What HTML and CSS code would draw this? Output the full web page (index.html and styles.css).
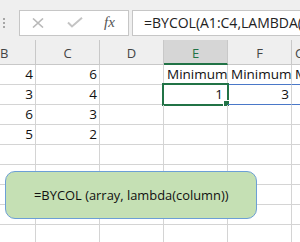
FILE: index.html
```html
<!DOCTYPE html>
<html lang="en">
<head>
  <meta charset="UTF-8" />
  <title>BYCOL</title>
  <link rel="stylesheet" href="styles.css">
</head>
<body>
  <div class="app">
    <!-- formula bar -->
    <div class="toolbar">
      <div class="grip"><span></span><span></span><span></span></div>
      <div class="fx-buttons">
        <svg class="icon cancel" width="12" height="10" viewBox="0 0 12 10">
          <path d="M1 0.5 L11 9.5 M11 0.5 L1 9.5" stroke="#b9b9b9" stroke-width="1.6" fill="none"/>
        </svg>
        <svg class="icon enter" width="16" height="11" viewBox="0 0 16 11">
          <path d="M1 5.5 L5 9.5 L15 0.8" stroke="#c4c4c4" stroke-width="2" fill="none"/>
        </svg>
        <span class="fx">fx</span>
      </div>
      <div class="formula">=BYCOL(A1:C4,LAMBDA(a,MIN(a)))</div>
    </div>

    <!-- grid -->
    <div class="sheet">
      <div class="row head">
        <div class="cell col-b">B</div>
        <div class="cell">C</div>
        <div class="cell">D</div>
        <div class="cell active">E</div>
        <div class="cell">F</div>
        <div class="cell col-g">G</div>
      </div>
      <div class="row">
        <div class="cell col-b num">4</div>
        <div class="cell num">6</div>
        <div class="cell"></div>
        <div class="cell">Minimum</div>
        <div class="cell spill-bottom">Minimum</div>
        <div class="cell col-g spill-bottom">Minimum</div>
      </div>
      <div class="row">
        <div class="cell col-b num">3</div>
        <div class="cell num">4</div>
        <div class="cell"></div>
        <div class="cell num selected">1<span class="sel-box"></span><span class="handle"></span></div>
        <div class="cell num spill-bottom">3</div>
        <div class="cell col-g spill-bottom"></div>
      </div>
      <div class="row">
        <div class="cell col-b num">6</div>
        <div class="cell num">3</div>
        <div class="cell"></div><div class="cell"></div><div class="cell"></div><div class="cell col-g"></div>
      </div>
      <div class="row">
        <div class="cell col-b num">5</div>
        <div class="cell num">2</div>
        <div class="cell"></div><div class="cell"></div><div class="cell"></div><div class="cell col-g"></div>
      </div>
      <div class="row">
        <div class="cell col-b"></div><div class="cell"></div><div class="cell"></div><div class="cell"></div><div class="cell"></div><div class="cell col-g"></div>
      </div>
      <div class="row">
        <div class="cell col-b"></div><div class="cell"></div><div class="cell"></div><div class="cell"></div><div class="cell"></div><div class="cell col-g"></div>
      </div>
      <div class="row">
        <div class="cell col-b"></div><div class="cell"></div><div class="cell"></div><div class="cell"></div><div class="cell"></div><div class="cell col-g"></div>
      </div>
      <div class="row">
        <div class="cell col-b"></div><div class="cell"></div><div class="cell"></div><div class="cell"></div><div class="cell"></div><div class="cell col-g"></div>
      </div>
      <div class="row">
        <div class="cell col-b"></div><div class="cell"></div><div class="cell"></div><div class="cell"></div><div class="cell"></div><div class="cell col-g"></div>
      </div>
    </div>

    <!-- shape floating over the sheet -->
    <div class="callout">=BYCOL (array, lambda(column))</div>
  </div>
</body>
</html>
```

FILE: styles.css
```css
body {
  margin: 0;
  font-family: 'Open Sans', sans-serif;
  background: #fff;
  overflow: hidden;
}

.app {
  position: relative;
  width: 300px;
  height: 242px;
  overflow: hidden;
}

/* formula bar */
.toolbar {
  height: 40px;
  background: #efefef;
  display: flex;
  align-items: center;
  padding-top: 5px;
  box-sizing: border-box;
}

.grip {
  width: 19px;
  display: flex;
  flex-direction: column;
  gap: 2px;
  padding-left: 3px;
  box-sizing: border-box;
}

.grip span {
  width: 2px;
  height: 2px;
  background: #a6a6a6;
}

.fx-buttons {
  width: 110px;
  height: 26px;
  box-sizing: border-box;
  background: #fff;
  border: 1px solid #c6c6c6;
  display: flex;
  align-items: center;
  padding-left: 12px;
}

.enter {
  margin-left: 23px;
}

.fx {
  font-family: 'Liberation Serif', serif;
  font-style: italic;
  font-size: 15px;
  color: #555;
  margin-left: 21px;
}

.formula {
  margin-left: 3px;
  flex: 1;
  height: 26px;
  box-sizing: border-box;
  background: #fff;
  border: 1px solid #c6c6c6;
  border-right: none;
  padding-left: 11px;
  font-size: 14px;
  line-height: 24px;
  color: #222;
  white-space: nowrap;
  overflow: hidden;
}

/* grid */
.row {
  display: flex;
  height: 20px;
}

.cell {
  position: relative;
  width: 64px;
  flex: none;
  box-sizing: border-box;
  border-right: 1px solid #d4d4d4;
  border-bottom: 1px solid #d4d4d4;
  font-size: 13.5px;
  line-height: 19px;
  padding: 0 3px;
  color: #111;
  white-space: nowrap;
}

.col-b {
  width: 36px;
}

.col-g {
  flex: 1;
  border-right: none;
  overflow: hidden;
}

.num {
  text-align: right;
  padding-right: 2px;
}

.head {
  height: 25px;
  background: #efefef;
}

.head .cell {
  text-align: center;
  color: #444;
  line-height: 27px;
  border-right-color: #c8c8c8;
  border-bottom-color: #c8c8c8;
  font-size: 13px;
}

.head .col-b {
  text-align: left;
  padding-left: 0;
}

.head .active {
  background: #d6d6d6;
  color: #217346;
  border-bottom: 2px solid #217346;
}

.spill-bottom {
  border-bottom-color: #4a78c8;
}

.selected {
  padding-right: 4px;
}

.sel-box {
  position: absolute;
  left: -2px;
  top: -2px;
  width: 67px;
  height: 23px;
  box-sizing: border-box;
  border: 2px solid #217346;
}

.handle {
  position: absolute;
  right: -3px;
  bottom: -3px;
  width: 5px;
  height: 5px;
  background: #217346;
  border: 1px solid #fff;
}

/* callout shape */
.callout {
  position: absolute;
  left: 5px;
  top: 171px;
  width: 252px;
  height: 48px;
  box-sizing: border-box;
  background: #c5e0b4;
  border: 1px solid #6c9fd6;
  border-radius: 10px;
  padding-left: 28px;
  font-size: 12.9px;
  line-height: 46px;
  color: #111;
  white-space: nowrap;
}
```
